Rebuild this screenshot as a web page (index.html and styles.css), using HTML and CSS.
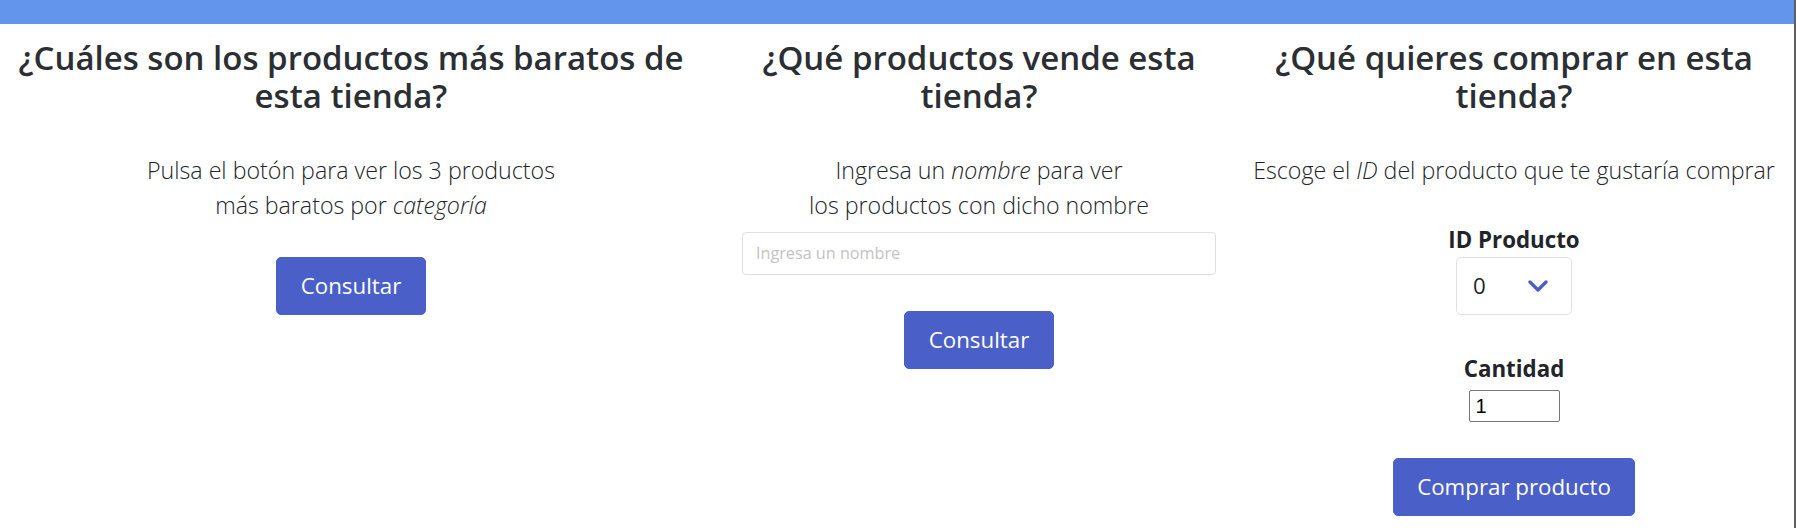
FILE: index.html
```html
<!DOCTYPE html>
<html lang="es">
<head>
<meta charset="utf-8">
<title>Tienda</title>
<link rel="stylesheet" href="styles.css">
</head>
<body>
<div class="topbar"></div>
<main class="sections">
  <section class="panel panel-cheap">
    <h2 class="panel-title">¿Cuáles son los productos más baratos de esta tienda?</h2>
    <p class="lead">Pulsa el botón para ver los 3 productos<br>más baratos por <em>categoría</em></p>
    <button class="btn btn-cheap" type="button">Consultar</button>
  </section>
  <section class="panel panel-search">
    <h2 class="panel-title">¿Qué productos vende esta tienda?</h2>
    <p class="lead">Ingresa un <em>nombre</em> para ver<br>los productos con dicho nombre</p>
    <input class="text-input" type="text" placeholder="Ingresa un nombre">
    <button class="btn btn-search" type="button">Consultar</button>
  </section>
  <section class="panel panel-buy">
    <h2 class="panel-title">¿Qué quieres comprar en esta tienda?</h2>
    <p class="lead">Escoge el <em>ID</em> del producto que te gustaría comprar</p>
    <label class="field-label label-id" for="idProducto">ID Producto</label>
    <div class="select-wrap">
      <select id="idProducto" class="select"><option>0</option></select>
      <svg class="chevron" width="20" height="12" viewBox="0 0 20 12" aria-hidden="true"><polyline points="2,2 10,10 18,2" fill="none" stroke="#4a5fc7" stroke-width="3.4" stroke-linecap="round" stroke-linejoin="round"/></svg>
    </div>
    <label class="field-label label-qty" for="cantidad">Cantidad</label>
    <input id="cantidad" class="qty" type="number" value="1" min="1">
    <button class="btn btn-buy" type="button">Comprar producto</button>
  </section>
</main>
</body>
</html>
```
FILE: styles.css
```css
* { box-sizing: border-box; }

html, body { margin: 0; padding: 0; }

body {
  font-family: "Open Sans", "Noto Sans", sans-serif;
  color: #212529;
  background: #fff;
  min-height: 100vh;
  border-right: 2px solid #5e5e5e;
}

.topbar {
  height: 24px;
  background: #6495ed;
}

.sections {
  display: grid;
  grid-template-columns: 702px 474px 516px;
  column-gap: 40px;
  padding: 15px 22px 0 0;
}

.panel {
  display: flex;
  flex-direction: column;
  align-items: center;
  text-align: center;
}

.panel-title {
  margin: 0 0 37px;
  font-size: 33px;
  line-height: 38.4px;
  font-weight: 600;
  color: #2b2f33;
}

.lead {
  margin: 0;
  font-size: 23.2px;
  line-height: 35px;
  font-weight: 350;
  white-space: nowrap;
}

.lead em { font-style: italic; }

.btn {
  font-family: inherit;
  font-size: 22.3px;
  line-height: 36px;
  font-weight: 400;
  color: #fff;
  background: #4a5fc7;
  border: 1px solid #4a5fc7;
  border-radius: 5px;
  padding: 10px 24px;
  cursor: pointer;
}

.btn-cheap { margin-top: 34px; }
.btn-search { margin-top: 36px; }
.btn-buy { margin-top: 36px; padding: 10px 23px; }

.text-input {
  margin-top: 9px;
  width: 100%;
  height: 43px;
  padding: 0 13px;
  font-family: inherit;
  font-size: 16.2px;
  color: #212529;
  border: 1px solid #dcdfe3;
  border-radius: 4px;
  background: #fff;
}

.text-input::placeholder { color: #c3c3c3; }

.field-label {
  display: block;
  font-size: 22.3px;
  line-height: 26.8px;
  font-weight: 700;
}

.label-id { margin-top: 39px; }
.label-qty { margin-top: 41px; }

.select-wrap {
  position: relative;
  margin-top: 3px;
  width: 116px;
  height: 58px;
}

.select {
  appearance: none;
  -webkit-appearance: none;
  width: 100%;
  height: 100%;
  padding: 0 0 0 16px;
  font-family: inherit;
  font-size: 22.3px;
  color: #212529;
  background: #fff;
  border: 1px solid #dee2e6;
  border-radius: 5px;
}

.chevron {
  position: absolute;
  right: 24px;
  top: 23px;
  pointer-events: none;
}

.qty {
  margin-top: 8px;
  width: 91px;
  height: 32px;
  padding: 0 6px;
  font-family: "Liberation Sans", Arial, sans-serif;
  font-size: 20px;
  color: #000;
  border: 1px solid #767676;
  border-radius: 2px;
  background: #fff;
}
```
